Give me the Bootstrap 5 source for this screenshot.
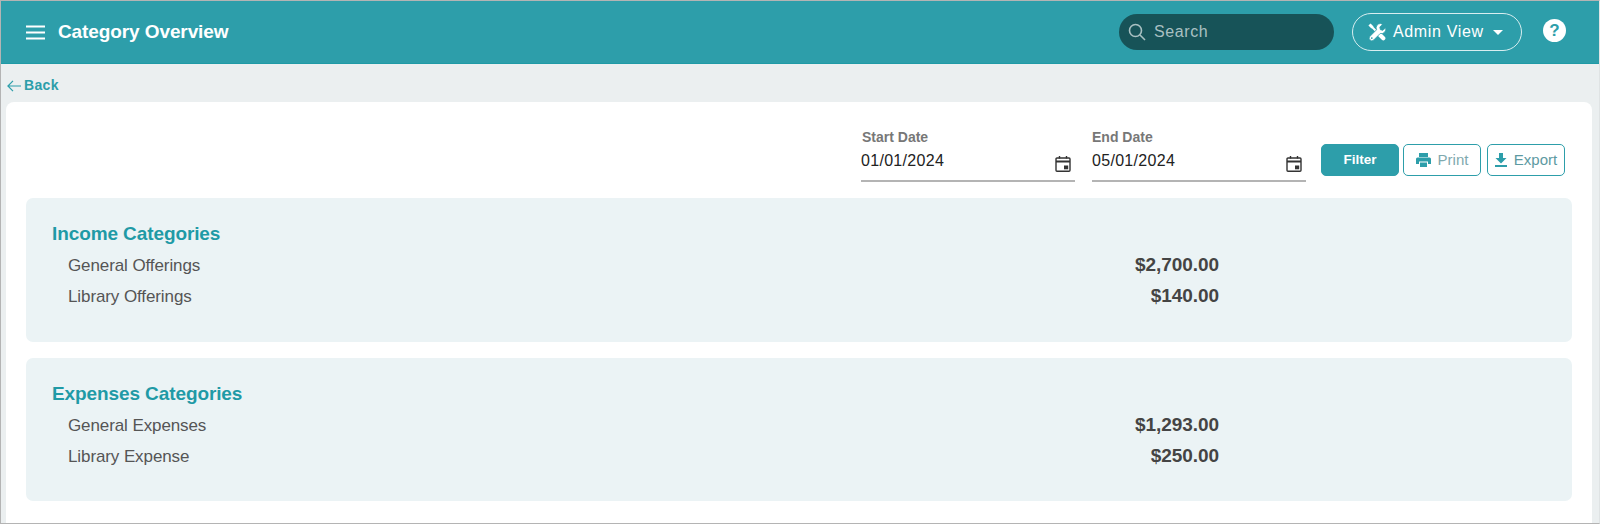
<!DOCTYPE html>
<html lang="en">
<head>
<meta charset="utf-8">
<title>Category Overview</title>
<link rel="stylesheet" href="https://cdn.jsdelivr.net/npm/bootstrap@5.3.0/dist/css/bootstrap.min.css">
<style>
html,body{height:524px;overflow:hidden}
body{font-family:"Liberation Sans",Arial,sans-serif;background:#ebeff0;color:#333}
.frame{height:524px;border:1px solid #b4b4b4;border-right-color:#dfe3e4;display:flex;flex-direction:column}
.topbar{height:63px;background:#2d9eaa;border-bottom:1px solid #1f9aa6;padding:0 33px 0 25px;flex:none}
.menu-btn{width:19px;height:15px;display:block;margin-right:13px}
.page-title{font-size:19px;font-weight:700;color:#fff;margin:0;letter-spacing:-.1px}
.search-box{width:215px;height:36px;background:#175358;border-radius:18px;padding-left:9px;margin-right:18px;color:#a9c0c2;font-size:16px;letter-spacing:.6px}
.search-box svg{margin-right:8px}
.admin-btn{width:170px;height:38px;border:1px solid #d8eef0;border-radius:19px;color:#fff;font-size:16px;letter-spacing:.65px;margin-right:21px;background:transparent;padding:0 0 0 15px}
.admin-btn svg{margin-right:7px}
.admin-btn .caret{width:0;height:0;border-left:5px solid transparent;border-right:5px solid transparent;border-top:5px solid #fff;margin-left:9px}
.help-dot{width:23px;height:23px;border-radius:50%;background:#fff;color:#2d9eaa;font-weight:700;font-size:17px;line-height:23px;text-align:center;margin-top:-3px}
.back-link{height:38px;padding:13px 0 0 6px;color:#2d9eaa;font-size:14px;font-weight:700;text-decoration:none;flex:none;letter-spacing:.35px;line-height:16px}
.back-link svg{margin-right:3px;vertical-align:-2px}
.sheet{flex:1;background:#fff;border-radius:8px 8px 0 0;margin:0 7px 0 5px;padding:25px 20px 0 20px;min-height:0}
.filter-row{height:71px;padding-right:7px;justify-content:flex-end}
.date-field{width:214px;margin-right:17px;position:relative;border-bottom:2px solid #b4b4b4;height:52px;margin-top:3px}
.date-field.last-f{margin-right:15px}
.date-label{font-size:14px;font-weight:700;color:#777;line-height:15px;padding-left:1px;margin-bottom:6px}
.last-f .date-label{padding-left:0}
.date-value{font-size:16px;color:#222;line-height:19px;letter-spacing:.3px}
.date-field svg{position:absolute;right:4px;top:26px}
.act{height:32px;width:78px;font-size:15px;border-radius:5px;padding:0;display:flex;align-items:center;justify-content:center;margin-top:17px}
.act-fill{background:#2d9eaa;border:1px solid #2d9eaa;color:#fff;font-weight:700;font-size:13.500px}
.act-line{background:#fff;border:1px solid #2d9eaa;color:#7fa9ae;margin-left:4px}
.act-line.exp{color:#5d9aa2;margin-left:6px}
.act-line svg{margin-right:7px}
.group-box{background:#ebf3f5;border-radius:7px;height:144px;padding:25px 26px 0;margin-bottom:16px}
.group-box.tail-box{height:143px}
.group-box h2{font-size:19px;font-weight:700;color:#1f9aa6;margin:0 0 6px;line-height:21px;letter-spacing:-.1px}
.line-item{height:31px;padding-left:16px;display:flex;align-items:center;color:#555;font-size:17px;letter-spacing:-.1px}
.line-name{width:1061px}
.line-amt{width:90px;text-align:right;font-weight:700;font-size:19px;color:#444;letter-spacing:-.05px}
</style>
</head>
<body>
<div class="frame">
  <header class="topbar d-flex align-items-center">
    <svg class="menu-btn" viewBox="0 0 19 15" fill="none" stroke="#fff" stroke-width="2"><path d="M0 1.500h19M0 7.500h19M0 13.500h19"/></svg>
    <h1 class="page-title">Category Overview</h1>
    <div class="ms-auto d-flex align-items-center">
      <div class="search-box d-flex align-items-center">
        <svg width="18" height="18" viewBox="0 0 18 18" fill="none" stroke="#a9c0c2" stroke-width="1.600"><circle cx="7.500" cy="7.500" r="6"/><path d="M12 12l5 5"/></svg>
        <span>Search</span>
      </div>
      <button class="admin-btn d-flex align-items-center" type="button">
        <svg width="18" height="18" viewBox="0 0 18 18" fill="none">
          <path d="M1.500 1.500L4.500 4.500" stroke="#fff" stroke-width="3"/>
          <path d="M4 4L11 11" stroke="#fff" stroke-width="2"/>
          <path d="M10.800 10.800L15.300 15.300" stroke="#fff" stroke-width="4.200" stroke-linecap="round"/>
          <path d="M12.500.5a4.500 4.500 0 0 0-4 6.300L2 13.300A2.600 2.600 0 0 0 5.700 17l6.500-6.500a4.500 4.500 0 0 0 5.400-5.800L15 7.300l-2.600-.6-.6-2.600 2.600-2.600a4.500 4.500 0 0 0-1.900-1z" fill="#fff" stroke="#2d9eaa" stroke-width=".8"/>
          <circle cx="3.800" cy="15.100" r=".9" fill="#2d9eaa"/>
        </svg>
        <span>Admin View</span><span class="caret"></span>
      </button>
      <div class="help-dot">?</div>
    </div>
  </header>
  <a class="back-link" href="#"><svg width="14" height="12" viewBox="0 0 14 12" fill="none" stroke="#2d9eaa" stroke-width="1.200"><path d="M14 6H1M6 .8L.9 6 6 11.200"/></svg>Back</a>
  <main class="sheet">
    <div class="filter-row d-flex align-items-start">
      <div class="date-field">
        <div class="date-label">Start Date</div>
        <div class="date-value">01/01/2024</div>
        <svg width="16" height="16" viewBox="0 0 16 16" fill="none" stroke="#333" stroke-width="1.400"><rect x="1" y="2" width="14" height="13.300" rx="1"/><path d="M1 5.500h14" stroke-width="2"/><path d="M4.500 0v2.500M11.500 0v2.500"/><rect x="9" y="9.500" width="4.200" height="3.800" fill="#333" stroke="none"/></svg>
      </div>
      <div class="date-field last-f">
        <div class="date-label">End Date</div>
        <div class="date-value">05/01/2024</div>
        <svg width="16" height="16" viewBox="0 0 16 16" fill="none" stroke="#333" stroke-width="1.400"><rect x="1" y="2" width="14" height="13.300" rx="1"/><path d="M1 5.500h14" stroke-width="2"/><path d="M4.500 0v2.500M11.500 0v2.500"/><rect x="9" y="9.500" width="4.200" height="3.800" fill="#333" stroke="none"/></svg>
      </div>
      <button class="act act-fill" type="button">Filter</button>
      <button class="act act-line" type="button"><svg width="15" height="14" viewBox="0 0 15 14" fill="#2d9eaa"><path d="M3 0h9v4H3zM1.500 4.500h12A1.500 1.500 0 0 1 15 6v5h-3V8.500H3V11H0V6a1.500 1.500 0 0 1 1.500-1.500zM4 9.500h7V14H4z"/></svg>Print</button>
      <button class="act act-line exp" type="button"><svg width="12" height="14" viewBox="0 0 12 14" fill="#2d9eaa"><path d="M4 0h4v5h3.500L6 10.500.5 5H4zM0 12h12v2H0z"/></svg>Export</button>
    </div>
    <section class="group-box">
      <h2>Income Categories</h2>
      <div class="line-item"><span class="line-name">General Offerings</span><span class="line-amt">$2,700.00</span></div>
      <div class="line-item"><span class="line-name">Library Offerings</span><span class="line-amt">$140.00</span></div>
    </section>
    <section class="group-box tail-box">
      <h2>Expenses Categories</h2>
      <div class="line-item"><span class="line-name">General Expenses</span><span class="line-amt">$1,293.00</span></div>
      <div class="line-item"><span class="line-name">Library Expense</span><span class="line-amt">$250.00</span></div>
    </section>
  </main>
</div>
<script src="https://cdn.jsdelivr.net/npm/bootstrap@5.3.0/dist/js/bootstrap.bundle.min.js"></script>
</body>
</html>
